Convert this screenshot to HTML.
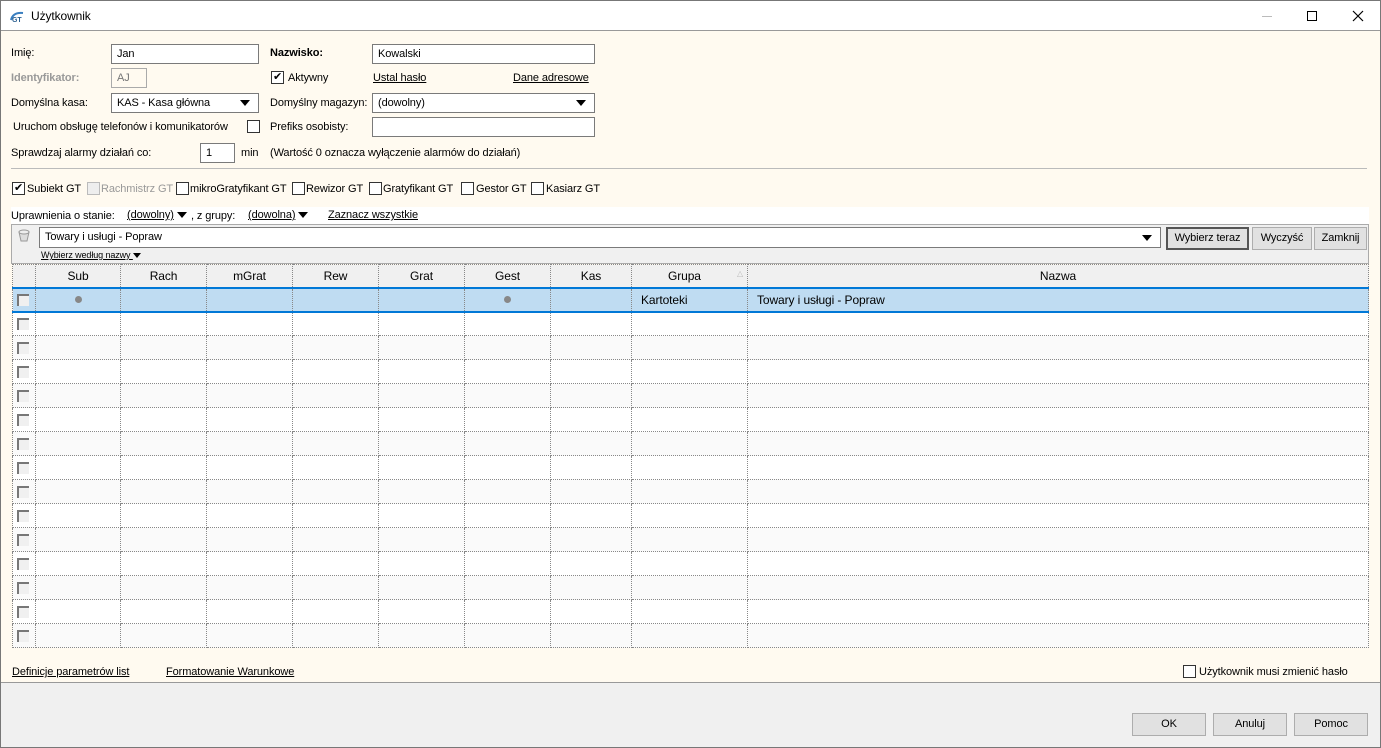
<!DOCTYPE html>
<html><head><meta charset="utf-8"><style>
*{box-sizing:border-box;margin:0;padding:0}
body{width:1381px;height:748px;overflow:hidden;background:#f0f0f0;font-family:"Liberation Sans",sans-serif;font-size:11px;color:#000;position:relative;letter-spacing:-0.1px}
.a{position:absolute;white-space:nowrap}
.win{position:absolute;left:0;top:0;width:1381px;height:748px;border:1px solid #777}
.title{position:absolute;left:0;top:0;width:1379px;height:30px;background:#fff;border-bottom:1px solid #999}
.panel{position:absolute;left:0;top:30px;width:1379px;height:652px;background:#fffaf0;border-bottom:1px solid #999}
.inp{position:absolute;height:20px;background:#fff;border:1px solid #7a7a7a;padding:3px 5px;font-size:11px}
.cb{position:absolute;width:13px;height:13px;border:1px solid #333;background:#fff}
.u{text-decoration:underline}
.tri{display:inline-block;width:0;height:0;border-left:5px solid transparent;border-right:5px solid transparent;border-top:6px solid #000}
.btn{position:absolute;height:23px;background:#e1e1e1;border:1px solid #adadad;text-align:center;line-height:21px;font-size:11px}
table{position:absolute;left:11px;top:263px;border-collapse:collapse;table-layout:fixed;width:1357px}
td{border:1px dotted #888;height:24px;font-size:12px}
th{border:1px dotted #888;height:23px;background:#f0f0f0;font-weight:normal;font-size:12px}
tr.alt td{background:#fafafa}
tr td{background:#fff}
tr.sel td{background:#bfdcf2;border-top:2px solid #0078d7;border-bottom:2px solid #0078d7}
.rc{display:block;width:12px;height:12px;margin-left:4px;border-top:2px solid #777;border-left:2px solid #777;background:#f0f0f0}
.dot{display:block;width:7px;height:7px;border-radius:50%;background:#888;margin:auto}
</style></head><body>
<div class="win">
<div class="title">
<svg class="a" style="left:8px;top:8px" width="16" height="14"><path d="M2 11 Q4 3 14 4" stroke="#3a7fc0" stroke-width="2" fill="none"/><text x="3" y="13" font-size="7" font-weight="bold" fill="#2a5f90" font-family="Liberation Sans">GT</text></svg>
<div class="a" style="left:30px;top:8px;font-size:12px">Użytkownik</div>
<div class="a" style="left:1261px;top:15px;width:10px;height:1px;background:#bbb"></div>
<div class="a" style="left:1306px;top:10px;width:10px;height:10px;border:1px solid #000"></div>
<svg class="a" style="left:1351px;top:9px" width="12" height="12"><path d="M1 1L11 11M11 1L1 11" stroke="#000" stroke-width="1.2"/></svg>
</div>
<div class="panel"></div>

<div class="a" style="left:10px;top:46px">Imię:</div>
<div class="inp" style="left:110px;top:43px;width:148px">Jan</div>
<div class="a" style="left:269px;top:46px;font-weight:bold">Nazwisko:</div>
<div class="inp" style="left:371px;top:43px;width:223px">Kowalski</div>

<div class="a" style="left:10px;top:71px;color:#999;font-weight:bold">Identyfikator:</div>
<div class="inp" style="left:110px;top:67px;width:36px;border-color:#aaa;background:#fffaf0;color:#777">AJ</div>
<div class="cb" style="left:270px;top:70px;font-size:11px;line-height:10px;text-align:center">✔</div>
<div class="a" style="left:287px;top:71px">Aktywny</div>
<div class="a u" style="left:372px;top:71px">Ustal hasło</div>
<div class="a u" style="left:512px;top:71px">Dane adresowe</div>

<div class="a" style="left:10px;top:96px">Domyślna kasa:</div>
<div class="inp" style="left:110px;top:92px;width:148px">KAS - Kasa główna<span class="tri" style="position:absolute;right:8px;top:6px"></span></div>
<div class="a" style="left:269px;top:96px">Domyślny magazyn:</div>
<div class="inp" style="left:371px;top:92px;width:223px">(dowolny)<span class="tri" style="position:absolute;right:8px;top:6px"></span></div>

<div class="a" style="left:12px;top:120px">Uruchom obsługę telefonów i komunikatorów</div>
<div class="cb" style="left:246px;top:119px"></div>
<div class="a" style="left:269px;top:120px">Prefiks osobisty:</div>
<div class="inp" style="left:371px;top:116px;width:223px"></div>

<div class="a" style="left:10px;top:146px">Sprawdzaj alarmy działań co:</div>
<div class="inp" style="left:199px;top:142px;width:35px">1</div>
<div class="a" style="left:240px;top:146px">min</div>
<div class="a" style="left:269px;top:146px">(Wartość 0 oznacza wyłączenie alarmów do działań)</div>
<div class="a" style="left:10px;top:167px;width:1356px;height:1px;background:#bbb"></div>

<div class="cb" style="left:11px;top:181px;font-size:11px;line-height:10px;text-align:center">✔</div><div class="a" style="left:26px;top:182px">Subiekt GT</div>
<div class="cb" style="left:86px;top:181px;border-color:#bbb;background:#eee"></div><div class="a" style="left:100px;top:182px;color:#999">Rachmistrz GT</div>
<div class="cb" style="left:175px;top:181px"></div><div class="a" style="left:189px;top:182px">mikroGratyfikant GT</div>
<div class="cb" style="left:291px;top:181px"></div><div class="a" style="left:305px;top:182px">Rewizor GT</div>
<div class="cb" style="left:368px;top:181px"></div><div class="a" style="left:382px;top:182px">Gratyfikant GT</div>
<div class="cb" style="left:460px;top:181px"></div><div class="a" style="left:475px;top:182px">Gestor GT</div>
<div class="cb" style="left:530px;top:181px"></div><div class="a" style="left:545px;top:182px">Kasiarz GT</div>

<div class="a" style="left:10px;top:206px;width:1358px;height:17px;background:#fff"></div>
<div class="a" style="left:10px;top:209px">Uprawnienia o stanie:</div>
<div class="a" style="left:126px;top:208px"><span class="u">(dowolny)</span> <span class="tri"></span></div>
<div class="a" style="left:190px;top:209px">, z grupy:</div>
<div class="a" style="left:247px;top:208px"><span class="u">(dowolna)</span> <span class="tri"></span></div>
<div class="a u" style="left:327px;top:208px">Zaznacz wszystkie</div>

<div class="a" style="left:10px;top:223px;width:1358px;height:40px;background:#f0f0f0;border:1px solid #aaa"></div>
<svg class="a" style="left:15px;top:227px" width="16" height="16"><path d="M3 4h10l-2 9h-6z" fill="#ddd" stroke="#999"/><ellipse cx="8" cy="4" rx="5" ry="2" fill="#eee" stroke="#999"/></svg>
<div class="inp" style="left:38px;top:226px;width:1122px;height:21px">Towary i usługi - Popraw<span class="tri" style="position:absolute;right:8px;top:7px"></span></div>
<div class="btn" style="left:1165px;top:226px;width:83px;border:2px solid #555;line-height:19px">Wybierz teraz</div>
<div class="btn" style="left:1251px;top:226px;width:60px">Wyczyść</div>
<div class="btn" style="left:1313px;top:226px;width:53px">Zamknij</div>
<div class="a u" style="left:40px;top:249px;font-size:9px">Wybierz według nazwy <span class="tri" style="border-width:5px 4px 0"></span></div>

<table>
<colgroup><col style="width:23px"><col style="width:85px"><col style="width:86px"><col style="width:86px"><col style="width:86px"><col style="width:86px"><col style="width:86px"><col style="width:81px"><col style="width:116px"><col></colgroup>
<tr><th></th><th>Sub</th><th>Rach</th><th>mGrat</th><th>Rew</th><th>Grat</th><th>Gest</th><th>Kas</th><th>Grupa <span style="float:right;color:#bbb;font-size:8px;margin-right:4px">△</span></th><th>Nazwa</th></tr>
<tr class="sel"><td><span class="rc"></span></td><td><span class="dot"></span></td><td></td><td></td><td></td><td></td><td><span class="dot"></span></td><td></td><td style="padding-left:9px">Kartoteki</td><td style="padding-left:9px">Towary i usługi - Popraw</td></tr>
<tr><td><span class="rc"></span></td><td></td><td></td><td></td><td></td><td></td><td></td><td></td><td></td><td></td></tr>
<tr class="alt"><td><span class="rc"></span></td><td></td><td></td><td></td><td></td><td></td><td></td><td></td><td></td><td></td></tr>
<tr><td><span class="rc"></span></td><td></td><td></td><td></td><td></td><td></td><td></td><td></td><td></td><td></td></tr>
<tr class="alt"><td><span class="rc"></span></td><td></td><td></td><td></td><td></td><td></td><td></td><td></td><td></td><td></td></tr>
<tr><td><span class="rc"></span></td><td></td><td></td><td></td><td></td><td></td><td></td><td></td><td></td><td></td></tr>
<tr class="alt"><td><span class="rc"></span></td><td></td><td></td><td></td><td></td><td></td><td></td><td></td><td></td><td></td></tr>
<tr><td><span class="rc"></span></td><td></td><td></td><td></td><td></td><td></td><td></td><td></td><td></td><td></td></tr>
<tr class="alt"><td><span class="rc"></span></td><td></td><td></td><td></td><td></td><td></td><td></td><td></td><td></td><td></td></tr>
<tr><td><span class="rc"></span></td><td></td><td></td><td></td><td></td><td></td><td></td><td></td><td></td><td></td></tr>
<tr class="alt"><td><span class="rc"></span></td><td></td><td></td><td></td><td></td><td></td><td></td><td></td><td></td><td></td></tr>
<tr><td><span class="rc"></span></td><td></td><td></td><td></td><td></td><td></td><td></td><td></td><td></td><td></td></tr>
<tr class="alt"><td><span class="rc"></span></td><td></td><td></td><td></td><td></td><td></td><td></td><td></td><td></td><td></td></tr>
<tr><td><span class="rc"></span></td><td></td><td></td><td></td><td></td><td></td><td></td><td></td><td></td><td></td></tr>
<tr class="alt"><td><span class="rc"></span></td><td></td><td></td><td></td><td></td><td></td><td></td><td></td><td></td><td></td></tr>
</table>

<div class="a u" style="left:11px;top:665px">Definicje parametrów list</div>
<div class="a u" style="left:165px;top:665px">Formatowanie Warunkowe</div>
<div class="cb" style="left:1182px;top:664px"></div>
<div class="a" style="left:1198px;top:665px">Użytkownik musi zmienić hasło</div>

<div class="btn" style="left:1131px;top:712px;width:74px">OK</div>
<div class="btn" style="left:1212px;top:712px;width:74px">Anuluj</div>
<div class="btn" style="left:1293px;top:712px;width:74px">Pomoc</div>
</div>
</body></html>
